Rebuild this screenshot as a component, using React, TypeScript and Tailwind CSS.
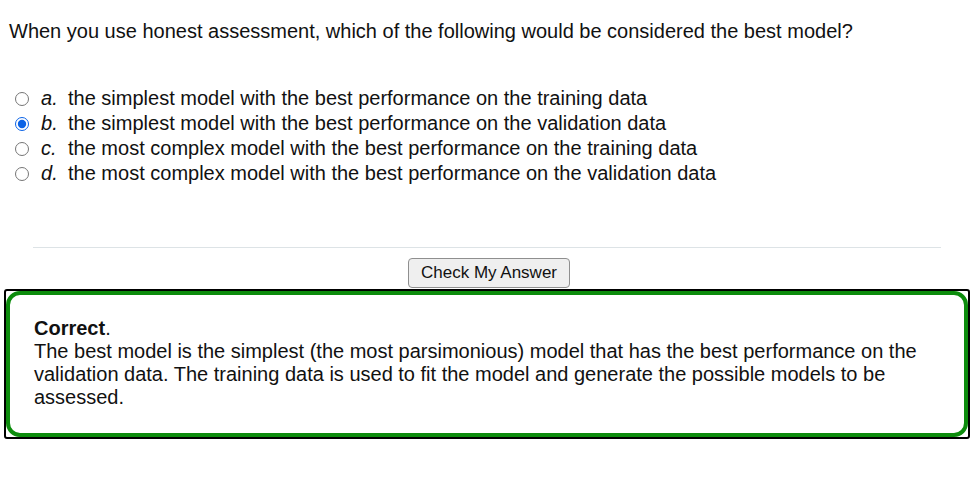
import React, { useState } from 'react';

const options = [
	{ key: 'a', text: 'the simplest model with the best performance on the training data' },
	{ key: 'b', text: 'the simplest model with the best performance on the validation data' },
	{ key: 'c', text: 'the most complex model with the best performance on the training data' },
	{ key: 'd', text: 'the most complex model with the best performance on the validation data' },
];

const App: React.FC = () => {
	const [picked, setPicked] = useState('b');

	return (
		<div className="w-[978px] h-[502px] bg-white text-[20px] text-[#111] font-['Liberation_Sans',Arial,sans-serif]">
			<p className="pl-[9px] pt-[20px] leading-[23px]">
				When you use honest assessment, which of the following would be considered the best model?
			</p>

			<div className="mt-[43px] pl-[15px] flex flex-col">
				{options.map((o) => (
					<label key={o.key} className="flex items-center h-[25px] leading-[23px]">
						<input
							type="radio"
							name="q"
							checked={picked === o.key}
							onChange={() => setPicked(o.key)}
							className="w-[14px] h-[14px] m-0 accent-[#0b63e6]"
						/>
						<span className="italic ml-[12px] w-[27px]">{o.key}.</span>
						<span>{o.text}</span>
					</label>
				))}
			</div>

			<hr className="mx-[33px] mt-[61px] w-[908px] border-t border-[#dde3e6]" />

			<div className="flex justify-center mt-[10px]">
				<button className="h-[30px] px-[12px] text-[17px] border border-[#8f8f8f] rounded-[4px] bg-[#efefef] text-[#111]">
					Check My Answer
				</button>
			</div>

			<div className="mx-[4px] mt-[1px] w-[966px] border-2 border-black rounded-[3px]">
				<div className="border-4 border-[#0c8c0c] rounded-[14px] pl-[24px] pr-[20px] pt-[22px] pb-[24px] leading-[23px]">
					<p>
						<b>Correct</b>.
					</p>
					<p>
						The best model is the simplest (the most parsimonious) model that has the best performance on the
						validation data. The training data is used to fit the model and generate the possible models to be
						assessed.
					</p>
				</div>
			</div>
		</div>
	);
};

export default App;
